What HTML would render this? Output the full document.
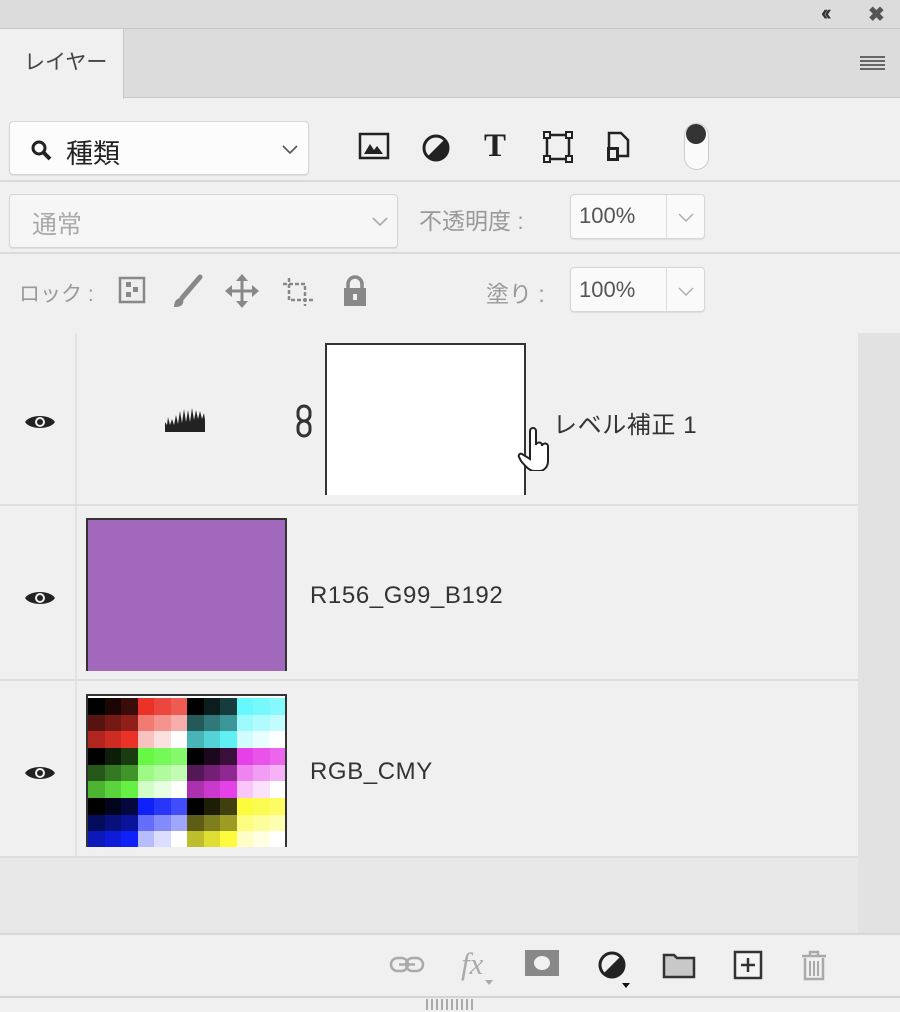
<!DOCTYPE html><html><head><meta charset="utf-8"><style>
*{margin:0;padding:0;box-sizing:border-box}
body{width:900px;height:1012px;background:#f0f0f0;position:relative;overflow:hidden;font-family:"Liberation Sans","Noto Sans CJK JP",sans-serif;color:#333}
.a{position:absolute}
.box{position:absolute;background:#fafafa;border:1px solid #d6d6d6;border-radius:4px;box-shadow:0 1px 1px #ddd}
.blk{position:absolute;width:49.5px;height:50px;display:grid;grid-template-columns:repeat(3,1fr);grid-template-rows:repeat(3,1fr)}
.d div:nth-child(1){background:#000}
.d div:nth-child(2){background:color-mix(in srgb,var(--c) 12%,#000)}
.d div:nth-child(3){background:color-mix(in srgb,var(--c) 25%,#000)}
.d div:nth-child(4){background:color-mix(in srgb,var(--c) 37%,#000)}
.d div:nth-child(5){background:color-mix(in srgb,var(--c) 50%,#000)}
.d div:nth-child(6){background:color-mix(in srgb,var(--c) 62%,#000)}
.d div:nth-child(7){background:color-mix(in srgb,var(--c) 75%,#000)}
.d div:nth-child(8){background:color-mix(in srgb,var(--c) 88%,#000)}
.d div:nth-child(9){background:var(--c)}
.t div:nth-child(1){background:var(--c)}
.t div:nth-child(2){background:color-mix(in srgb,var(--c) 90%,#fff)}
.t div:nth-child(3){background:color-mix(in srgb,var(--c) 80%,#fff)}
.t div:nth-child(4){background:color-mix(in srgb,var(--c) 65%,#fff)}
.t div:nth-child(5){background:color-mix(in srgb,var(--c) 52%,#fff)}
.t div:nth-child(6){background:color-mix(in srgb,var(--c) 40%,#fff)}
.t div:nth-child(7){background:color-mix(in srgb,var(--c) 30%,#fff)}
.t div:nth-child(8){background:color-mix(in srgb,var(--c) 15%,#fff)}
.t div:nth-child(9){background:#fff}
.eye{position:absolute;left:24px;width:32px;height:18px}
.nm{position:absolute;font-size:24px;letter-spacing:0.6px;color:#333}
</style></head><body>
<div class="a" style="left:0;top:0;width:900px;height:28px;background:#dcdcdc"></div>
<div class="a" style="left:821px;top:0px;font-size:22px;font-weight:bold;color:#333;letter-spacing:-4px">‹‹</div>
<div class="a" style="left:868px;top:2px;font-size:20px;font-weight:bold;color:#555">✖</div>
<div class="a" style="left:0;top:28px;width:900px;height:70px;background:#dcdcdc;border-top:1px solid #c8c8c8;border-bottom:1px solid #c8c8c8"></div>
<div class="a" style="left:0;top:29px;width:124px;height:70px;background:#f0f0f0;border-right:1px solid #c8c8c8"></div>
<div class="a" style="left:24px;top:46px;font-size:21px;color:#444">レイヤー</div>
<div class="a" style="left:860px;top:56px;width:25px;height:14px;border-top:2px solid #666;border-bottom:2px solid #666"></div>
<div class="a" style="left:860px;top:60px;width:25px;height:6px;border-top:2px solid #666;border-bottom:2px solid #666"></div>
<div class="box" style="left:9px;top:121px;width:300px;height:54px;background:#fcfcfc"></div>
<svg class="a" style="left:30px;top:139px" width="24" height="24" viewBox="0 0 24 24"><circle cx="9" cy="9" r="6" fill="none" stroke="#222" stroke-width="3"/><path d="M13 13l7 7" stroke="#222" stroke-width="4"/></svg>
<div class="a" style="left:66px;top:132px;font-size:27px;color:#222">種類</div>
<svg class="a" style="left:282px;top:145px" width="16" height="10"><path d="M1 1l7 7 7-7" fill="none" stroke="#555" stroke-width="1.6"/></svg>
<svg class="a" style="left:358px;top:132px" width="32" height="28" viewBox="0 0 32 28"><rect x="2" y="2" width="28" height="24" fill="none" stroke="#222" stroke-width="2.5"/><path d="M6 22l6-10 4 6 3-4 6 8z" fill="#222"/></svg>
<svg class="a" style="left:421px;top:133px" width="30" height="30"><circle cx="15" cy="15" r="12" fill="none" stroke="#222" stroke-width="3"/><path d="M23.5 6.5A12 12 0 0 1 6.5 23.5z" fill="#222"/></svg>
<div class="a" style="left:484px;top:128px;font-family:'Liberation Serif',serif;font-size:33px;font-weight:bold;color:#222">T</div>
<svg class="a" style="left:543px;top:131px" width="30" height="32"><rect x="4" y="4" width="22" height="24" fill="none" stroke="#222" stroke-width="2.5"/><g fill="#f0f0f0" stroke="#222" stroke-width="2"><rect x="1" y="1" width="6" height="6"/><rect x="23" y="1" width="6" height="6"/><rect x="1" y="25" width="6" height="6"/><rect x="23" y="25" width="6" height="6"/></g></svg>
<svg class="a" style="left:604px;top:130px" width="30" height="34"><path d="M5 3h12l7 7v16H5z" fill="none" stroke="#222" stroke-width="2.5"/><rect x="3" y="17" width="12" height="14" fill="#222"/><rect x="6" y="20" width="6" height="8" fill="#f0f0f0"/></svg>
<div class="a" style="left:684px;top:123px;width:25px;height:47px;border:1px solid #ccc;border-radius:13px;background:#fafafa"></div>
<div class="a" style="left:686px;top:124px;width:20px;height:20px;border-radius:50%;background:#333"></div>
<div class="a" style="left:0;top:180px;width:900px;height:2px;background:#dadada"></div>
<div class="box" style="left:9px;top:194px;width:389px;height:54px;background:#f6f6f6"></div>
<div class="a" style="left:32px;top:205px;font-size:25px;color:#aaa">通常</div>
<svg class="a" style="left:372px;top:217px" width="16" height="10"><path d="M1 1l7 7 7-7" fill="none" stroke="#aaa" stroke-width="1.6"/></svg>
<div class="a" style="left:419px;top:202px;font-size:23px;color:#999">不透明度 :</div>
<div class="box" style="left:570px;top:194px;width:135px;height:45px"></div>
<div class="a" style="left:666px;top:195px;width:1px;height:43px;background:#ddd"></div>
<div class="a" style="left:579px;top:203px;font-size:22px;color:#555">100%</div>
<svg class="a" style="left:678px;top:213px" width="16" height="10"><path d="M1 1l7 7 7-7" fill="none" stroke="#aaa" stroke-width="1.4"/></svg>
<div class="a" style="left:0;top:252px;width:900px;height:2px;background:#dadada"></div>
<div class="a" style="left:19px;top:278px;font-size:21px;color:#999">ロック :</div>
<svg class="a" style="left:118px;top:276px" width="28" height="28"><rect x="2" y="2" width="24" height="24" fill="#eee" stroke="#888" stroke-width="2.5"/><g fill="#888"><rect x="8" y="6" width="5" height="5"/><rect x="15" y="11" width="5" height="5"/><rect x="8" y="16" width="5" height="5"/></g></svg>
<svg class="a" style="left:170px;top:274px" width="34" height="36"><path d="M30 3L12 24" stroke="#888" stroke-width="5" stroke-linecap="round"/><path d="M4 33c0-6 3-9 7-9 3 1 3 4 1 7-2 2-5 2-8 2z" fill="#888"/></svg>
<svg class="a" style="left:225px;top:273px" width="34" height="36"><path d="M17 4v28M3 18h28" stroke="#888" stroke-width="3"/><path d="M17 1l-6 7h12zM17 35l-6-7h12zM0 18l7-6v12zM34 18l-7-6v12z" fill="#888"/></svg>
<svg class="a" style="left:281px;top:276px" width="36" height="32"><path d="M8 2v22h24M2 8h22v22" fill="none" stroke="#888" stroke-width="2.5" stroke-dasharray="4 2"/></svg>
<svg class="a" style="left:340px;top:274px" width="30" height="34"><path d="M8 15V10a7 7 0 0 1 14 0v5" fill="none" stroke="#888" stroke-width="3.5"/><rect x="4" y="14" width="22" height="18" fill="#888"/><rect x="13" y="20" width="4" height="6" fill="#f0f0f0"/></svg>
<div class="a" style="left:486px;top:275px;font-size:23px;color:#999">塗り :</div>
<div class="box" style="left:570px;top:267px;width:135px;height:45px"></div>
<div class="a" style="left:666px;top:268px;width:1px;height:43px;background:#ddd"></div>
<div class="a" style="left:579px;top:277px;font-size:22px;color:#555">100%</div>
<svg class="a" style="left:678px;top:287px" width="16" height="10"><path d="M1 1l7 7 7-7" fill="none" stroke="#aaa" stroke-width="1.4"/></svg>
<div class="a" style="left:858px;top:333px;width:42px;height:600px;background:#e2e2e2"></div>
<div class="a" style="left:0;top:858px;width:858px;height:75px;background:#e8e8e8"></div>
<div class="a" style="left:75px;top:333px;width:2px;height:524px;background:#e2e2e2"></div>
<div class="a" style="left:0;top:504px;width:858px;height:2px;background:#dedede"></div>
<div class="a" style="left:0;top:679px;width:858px;height:2px;background:#dedede"></div>
<div class="a" style="left:0;top:856px;width:858px;height:2px;background:#dedede"></div>
<svg style="display:none"><symbol id="eye" viewBox="0 0 32 18"><path d="M1 9C6 1 26 1 31 9 26 17 6 17 1 9z" fill="#222"/><circle cx="16" cy="9" r="5" fill="#f0f0f0"/><circle cx="16" cy="9" r="3" fill="#222"/></symbol></svg>
<svg class="eye" style="top:413px"><use href="#eye"/></svg>
<svg class="eye" style="top:589px"><use href="#eye"/></svg>
<svg class="eye" style="top:764px"><use href="#eye"/></svg>
<svg class="a" style="left:163px;top:404px" width="48" height="30"><path d="M2 28V18l2 3 1-8 2 8 2-6 2 6 2-10 2 9 2-13 2 12 2-14 2 13 2-12 2 12 2-14 2 12 2-10 2 9 2-8 2 8 2-6 1 7v12z" fill="#222"/></svg>
<svg class="a" style="left:294px;top:403px" width="20" height="36"><rect x="4" y="3" width="12" height="15" rx="6" fill="none" stroke="#333" stroke-width="3"/><rect x="4" y="18" width="12" height="15" rx="6" fill="none" stroke="#333" stroke-width="3"/></svg>
<div class="a" style="left:325px;top:343px;width:201px;height:152px;background:#fff;border:2px solid #333;border-bottom:none"></div>
<div class="nm" style="left:553px;top:405px">レベル補正 1</div>
<svg class="a" style="left:512px;top:425px" width="44" height="46"><path d="M18 34V6a3 3 0 0 1 6 0v14a3 3 0 0 1 6 1 3 3 0 0 1 6 1v14c0 6-4 10-9 10h-5c-4 0-8-4-13-10l-2-4c-1-2 1-4 3-3l8 5z" fill="#fff" stroke="#222" stroke-width="2"/></svg>
<div class="a" style="left:86px;top:518px;width:201px;height:153px;background:#a268bb;border:2px solid #333;border-bottom:none"></div>
<div class="nm" style="left:310px;top:582px">R156_G99_B192</div>
<div class="a" style="left:86px;top:694px;width:201px;height:153px;background:#fff;border:2px solid #333;border-bottom:none;overflow:hidden">
<div class="blk d" style="--c:#ea3228;left:0;top:2px"><div></div><div></div><div></div><div></div><div></div><div></div><div></div><div></div><div></div></div>
<div class="blk t" style="--c:#ea3228;left:49.5px;top:2px"><div></div><div></div><div></div><div></div><div></div><div></div><div></div><div></div><div></div></div>
<div class="blk d" style="--c:#60f0f4;left:99px;top:2px"><div></div><div></div><div></div><div></div><div></div><div></div><div></div><div></div><div></div></div>
<div class="blk t" style="--c:#66f8fc;left:148.5px;top:2px"><div></div><div></div><div></div><div></div><div></div><div></div><div></div><div></div><div></div></div>
<div class="blk d" style="--c:#66f044;left:0;top:52px"><div></div><div></div><div></div><div></div><div></div><div></div><div></div><div></div><div></div></div>
<div class="blk t" style="--c:#66f844;left:49.5px;top:52px"><div></div><div></div><div></div><div></div><div></div><div></div><div></div><div></div><div></div></div>
<div class="blk d" style="--c:#e640e8;left:99px;top:52px"><div></div><div></div><div></div><div></div><div></div><div></div><div></div><div></div><div></div></div>
<div class="blk t" style="--c:#e640e8;left:148.5px;top:52px"><div></div><div></div><div></div><div></div><div></div><div></div><div></div><div></div><div></div></div>
<div class="blk d" style="--c:#1020f8;left:0;top:102px"><div></div><div></div><div></div><div></div><div></div><div></div><div></div><div></div><div></div></div>
<div class="blk t" style="--c:#1020f8;left:49.5px;top:102px"><div></div><div></div><div></div><div></div><div></div><div></div><div></div><div></div><div></div></div>
<div class="blk d" style="--c:#fcfc3c;left:99px;top:102px"><div></div><div></div><div></div><div></div><div></div><div></div><div></div><div></div><div></div></div>
<div class="blk t" style="--c:#fcfc3c;left:148.5px;top:102px"><div></div><div></div><div></div><div></div><div></div><div></div><div></div><div></div><div></div></div>
</div>
<div class="nm" style="left:310px;top:758px">RGB_CMY</div>
<div class="a" style="left:0;top:933px;width:900px;height:2px;background:#d8d8d8"></div>
<svg class="a" style="left:389px;top:955px" width="36" height="20"><rect x="2" y="3" width="17" height="13" rx="6.5" fill="none" stroke="#aaa" stroke-width="2.5"/><rect x="17" y="3" width="17" height="13" rx="6.5" fill="none" stroke="#aaa" stroke-width="2.5"/><path d="M10 9.5h16" stroke="#aaa" stroke-width="2.5"/></svg>
<div class="a" style="left:461px;top:946px;font-family:'Liberation Serif',serif;font-style:italic;font-size:31px;color:#aaa">fx</div>
<svg class="a" style="left:485px;top:980px" width="8" height="6"><path d="M0 0h8L4 5z" fill="#aaa"/></svg>
<svg class="a" style="left:525px;top:950px" width="34" height="26"><rect x="0" y="0" width="34" height="26" fill="#888"/><ellipse cx="17" cy="13" rx="8" ry="7" fill="#f0f0f0"/></svg>
<svg class="a" style="left:597px;top:950px" width="36" height="40"><circle cx="15" cy="15" r="12" fill="none" stroke="#222" stroke-width="3"/><path d="M23.5 6.5A12 12 0 0 1 6.5 23.5z" fill="#222"/><path d="M25 33h8l-4 5z" fill="#111"/></svg>
<svg class="a" style="left:662px;top:951px" width="34" height="28"><path d="M2 4h10l3 3h17v19H2z" fill="#c8c8c8" stroke="#333" stroke-width="2.5"/></svg>
<svg class="a" style="left:733px;top:950px" width="30" height="30"><rect x="2" y="2" width="26" height="26" fill="#f4f4f4" stroke="#333" stroke-width="2.5"/><path d="M15 8v14M8 15h14" stroke="#333" stroke-width="2.5"/></svg>
<svg class="a" style="left:800px;top:950px" width="28" height="32"><path d="M2 6h24M10 6V2h8v4" fill="none" stroke="#aaa" stroke-width="2.5"/><path d="M5 8v21h18V8" fill="none" stroke="#aaa" stroke-width="2.5"/><path d="M10 11v15M14 11v15M18 11v15" stroke="#aaa" stroke-width="2"/></svg>
<div class="a" style="left:0;top:996px;width:900px;height:2px;background:#d4d4d4"></div>
<div class="a" style="left:426px;top:999px;width:48px;height:11px;background:repeating-linear-gradient(90deg,#aaa 0 2px,transparent 2px 5px)"></div>
</body></html>
